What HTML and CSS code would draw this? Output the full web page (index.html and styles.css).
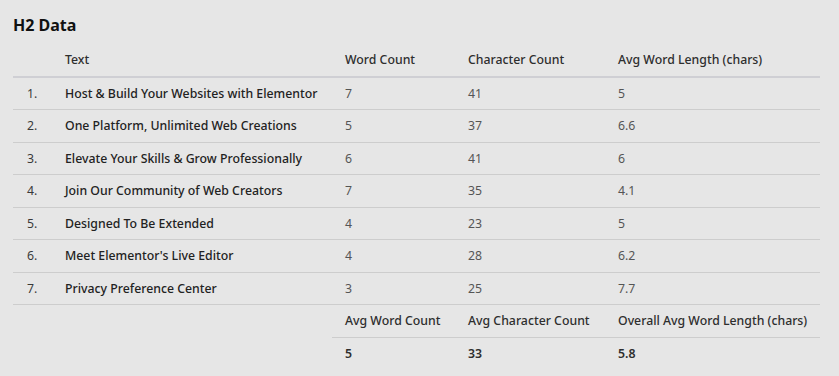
FILE: index.html
```html
<!DOCTYPE html>
<html lang="en">
<head>
<meta charset="utf-8">
<title>H2 Data</title>
<link rel="stylesheet" href="styles.css">
</head>
<body>
<section class="panel">
  <h2 class="title">H2 Data</h2>
  <table class="data">
    <colgroup>
      <col class="c-num"><col class="c-text"><col class="c-wc"><col class="c-cc"><col class="c-avg">
    </colgroup>
    <thead>
      <tr><th></th><th>Text</th><th>Word Count</th><th>Character Count</th><th>Avg Word Length (chars)</th></tr>
    </thead>
    <tbody>
      <tr><td class="idx">1.</td><td class="txt">Host &amp; Build Your Websites with Elementor</td><td>7</td><td>41</td><td>5</td></tr>
      <tr><td class="idx">2.</td><td class="txt">One Platform, Unlimited Web Creations</td><td>5</td><td>37</td><td>6.6</td></tr>
      <tr><td class="idx">3.</td><td class="txt">Elevate Your Skills &amp; Grow Professionally</td><td>6</td><td>41</td><td>6</td></tr>
      <tr><td class="idx">4.</td><td class="txt">Join Our Community of Web Creators</td><td>7</td><td>35</td><td>4.1</td></tr>
      <tr><td class="idx">5.</td><td class="txt">Designed To Be Extended</td><td>4</td><td>23</td><td>5</td></tr>
      <tr><td class="idx">6.</td><td class="txt">Meet Elementor's Live Editor</td><td>4</td><td>28</td><td>6.2</td></tr>
      <tr><td class="idx">7.</td><td class="txt">Privacy Preference Center</td><td>3</td><td>25</td><td>7.7</td></tr>
    </tbody>
    <tfoot>
      <tr class="f-labels"><td class="blank" colspan="2"></td><td>Avg Word Count</td><td>Avg Character Count</td><td>Overall Avg Word Length (chars)</td></tr>
      <tr class="f-values"><td class="blank" colspan="2"></td><td>5</td><td>33</td><td>5.8</td></tr>
    </tfoot>
  </table>
</section>
</body>
</html>
```
FILE: styles.css
```css
html, body {
  margin: 0;
  padding: 0;
  background: #e6e6e6;
}
body {
  font-family: "Noto Sans", "Open Sans", sans-serif;
  font-size: 12.3px;
  color: #333;
}
.panel {
  padding: 13px 13px 0 13px;
}
.title {
  margin: 0 0 7px 0;
  font-size: 16px;
  line-height: 24px;
  font-weight: 700;
  color: #111;
}
.data {
  width: 807px;
  border-collapse: collapse;
  table-layout: fixed;
}
.c-num { width: 39px; }
.c-text { width: 280px; }
.c-wc { width: 123px; }
.c-cc { width: 150px; }
.c-avg { width: 215px; }
.data th,
.data td {
  padding: 6px 13px;
  line-height: 19.5px;
  text-align: left;
  white-space: nowrap;
}
.data th {
  font-weight: 500;
  color: #2e2e2e;
  border-bottom: 2px solid #cfcfd4;
}
.data tbody td {
  border-bottom: 1px solid #cdcdcd;
  color: #555;
}
.data tbody td.idx {
  color: #3a3a3a;
  padding-left: 14px;
}
.data tbody td.txt {
  color: #222;
  font-weight: 500;
}
.data tfoot td {
  color: #2e2e2e;
}
.f-labels td {
  font-weight: 500;
  border-bottom: 1px solid #cdcdcd;
}
.f-labels td.blank {
  border-bottom: none;
}
.f-values td {
  font-weight: 600;
  color: #222;
}
```
